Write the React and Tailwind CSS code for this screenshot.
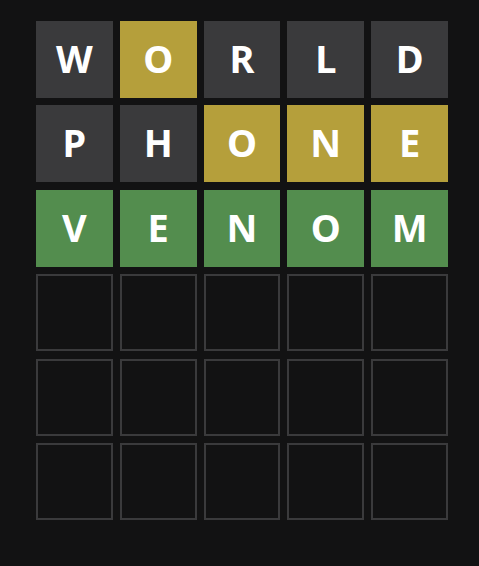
const ROWS = [
  [['W', 'gray'], ['O', 'yellow'], ['R', 'gray'], ['L', 'gray'], ['D', 'gray']],
  [['P', 'gray'], ['H', 'gray'], ['O', 'yellow'], ['N', 'yellow'], ['E', 'yellow']],
  [['V', 'green'], ['E', 'green'], ['N', 'green'], ['O', 'green'], ['M', 'green']],
  [],
  [],
  [],
];

const COLORS = {
  gray: 'bg-[#3a3a3c]',
  yellow: 'bg-[#b59f3b]',
  green: 'bg-[#538d4e]',
};

function Tile({ letter, state }) {
  if (!letter) {
    return <div className="border-2 border-[#3a3a3c]" />;
  }
  return (
    <div className={`flex items-center justify-center pb-[3px] text-white font-bold text-[38px] leading-none ${COLORS[state]}`}>
      {letter}
    </div>
  );
}

export default function App() {
  return (
    <div className="min-h-screen w-full bg-[#121213] pt-[21px] pl-[36px]" style={{ fontFamily: '"Noto Sans", "Open Sans", sans-serif' }}>
      <div className="grid grid-cols-5 grid-rows-6 gap-x-[7px] gap-y-[7.4px] w-[412px] h-[499px]">
        {ROWS.map((row, r) =>
          [0, 1, 2, 3, 4].map(c => (
            <Tile key={`${r}-${c}`} letter={row[c]?.[0]} state={row[c]?.[1]} />
          ))
        )}
      </div>
    </div>
  );
}
